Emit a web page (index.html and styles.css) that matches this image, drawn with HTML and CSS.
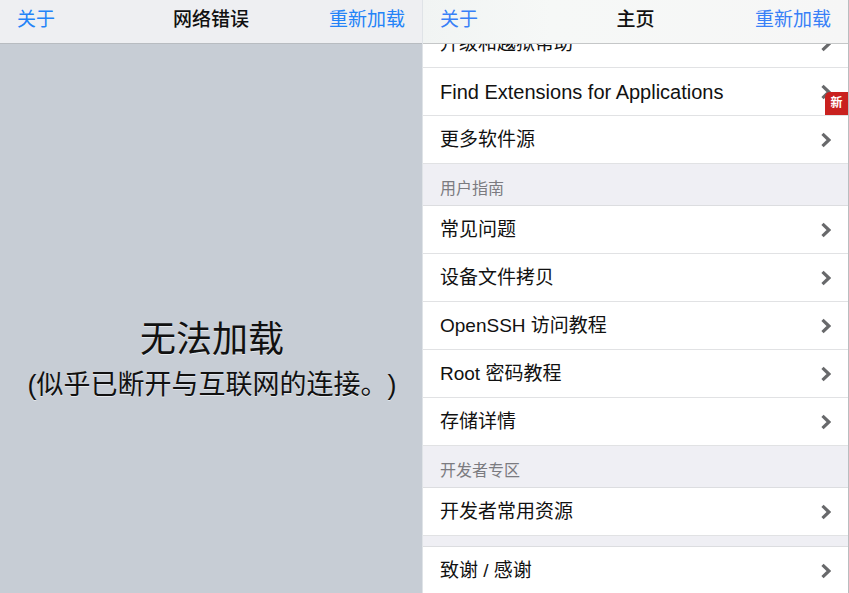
FILE: index.html
```html
<!DOCTYPE html>
<html lang="zh-CN">
<head>
<meta charset="utf-8">
<meta name="viewport" content="width=device-width, initial-scale=1">
<title>主页</title>
<link rel="stylesheet" href="styles.css">
</head>
<body>
<svg class="symbols" aria-hidden="true">
  <symbol id="chevron" viewBox="0 0 10 16"><path d="M1.5 1.8 7.9 8l-6.4 6.2" fill="none" stroke="#68696b" stroke-width="3.2"/></symbol>
</svg>
<div class="screens">
  <section class="screen screen-error">
    <header class="bar">
      <button class="bar-button" type="button">关于</button>
      <h1 class="bar-title">网络错误</h1>
      <button class="bar-button bar-end" type="button">重新加载</button>
    </header>
    <main class="message">
      <h2 class="message-title">无法加载</h2>
      <p class="message-text">(似乎已断开与互联网的连接。)</p>
    </main>
  </section>
  <section class="screen screen-home">
    <header class="bar bar-light">
      <button class="bar-button" type="button">关于</button>
      <h1 class="bar-title">主页</h1>
      <button class="bar-button bar-end" type="button">重新加载</button>
    </header>
    <main class="list">
      <nav class="group group-scrolled">
        <a class="row" href="#">升级和越狱帮助<svg class="chevron"><use href="#chevron"/></svg></a>
        <a class="row row-latin" href="#">Find Extensions for Applications<svg class="chevron"><use href="#chevron"/></svg><span class="badge">新</span></a>
        <a class="row" href="#">更多软件源<svg class="chevron"><use href="#chevron"/></svg></a>
      </nav>
      <h2 class="group-title">用户指南</h2>
      <nav class="group">
        <a class="row" href="#">常见问题<svg class="chevron"><use href="#chevron"/></svg></a>
        <a class="row" href="#">设备文件拷贝<svg class="chevron"><use href="#chevron"/></svg></a>
        <a class="row" href="#">OpenSSH 访问教程<svg class="chevron"><use href="#chevron"/></svg></a>
        <a class="row" href="#">Root 密码教程<svg class="chevron"><use href="#chevron"/></svg></a>
        <a class="row" href="#">存储详情<svg class="chevron"><use href="#chevron"/></svg></a>
      </nav>
      <h2 class="group-title">开发者专区</h2>
      <nav class="group">
        <a class="row" href="#">开发者常用资源<svg class="chevron"><use href="#chevron"/></svg></a>
      </nav>
      <nav class="group group-spaced">
        <a class="row" href="#">致谢 / 感谢<svg class="chevron"><use href="#chevron"/></svg></a>
      </nav>
    </main>
  </section>
</div>
</body>
</html>
```

FILE: styles.css
```css
* {
  box-sizing: border-box;
}

body {
  margin: 0;
  font-family: "Liberation Sans", "Noto Sans CJK SC", sans-serif;
  font-size: 19px;
  line-height: 24px;
  color: #111;
}

h1, h2, p {
  margin: 0;
}

.symbols {
  display: none;
}

.screens {
  display: grid;
  grid-template-columns: 422fr 427fr;
  height: 100vh;
  overflow: hidden;
}

.screen {
  display: flex;
  flex-direction: column;
  min-width: 0;
  min-height: 0;
}

.screen-error {
  background: #c7cdd5;
}

.screen-home {
  border-left: 1px solid #dfe3e7;
  border-right: 1px solid #b9bcbf;
  background: #efeff4;
}

.bar {
  flex: none;
  display: grid;
  grid-template-columns: 1fr auto 1fr;
  align-items: center;
  height: 44px;
  padding: 0 17px 7px;
  border-bottom: 1px solid #b8bcc1;
  background: #eeeff2;
  font-family: "Noto Sans CJK SC", sans-serif;
}

.bar-light {
  background: linear-gradient(90deg, #f1f4f3, #f6f8f7 30%, #f6f6f6);
  border-bottom-color: #c5c7c8;
}

.bar-button {
  justify-self: start;
  padding: 0;
  border: 0;
  background: none;
  font: inherit;
  color: #2383f8;
}

.bar-light .bar-button {
  color: #3880f7;
}

.bar-end {
  justify-self: end;
}

.bar-title {
  font-size: 19px;
  font-weight: 500;
}

.message {
  flex: 1;
  padding: 272px 8px 0 10px;
  text-align: center;
  text-shadow: 0 1px 0 #e4e8ec;
}

.message-title {
  font-size: 36px;
  line-height: 48px;
  font-weight: 400;
}

.message-text {
  font-size: 27px;
  line-height: 42px;
  white-space: nowrap;
  text-spacing-trim: space-all;
}

.list {
  flex: 1;
  min-height: 0;
  overflow: hidden;
}

.group {
  border-top: 1px solid #dcdde0;
  background: #fff;
}

.group-scrolled {
  margin-top: -25px;
}

.group-spaced {
  margin-top: 10px;
}

.group-title {
  height: 41px;
  padding: 13px 17px 0;
  font-size: 16px;
  font-weight: 400;
  color: #7b7b80;
}

.row {
  position: relative;
  display: flex;
  align-items: center;
  justify-content: space-between;
  height: 48px;
  padding: 0 17px;
  border-bottom: 1px solid #e1e2e4;
  color: inherit;
  text-decoration: none;
}

.row-latin {
  font-size: 20px;
}

.chevron {
  flex: none;
  width: 10px;
  height: 16px;
}

.badge {
  position: absolute;
  right: 0;
  bottom: 0;
  width: 23px;
  height: 23px;
  border-top-left-radius: 5px;
  background: #c9211f;
  font-size: 12px;
  font-weight: 700;
  line-height: 23px;
  text-align: center;
  color: #fff;
}
```
